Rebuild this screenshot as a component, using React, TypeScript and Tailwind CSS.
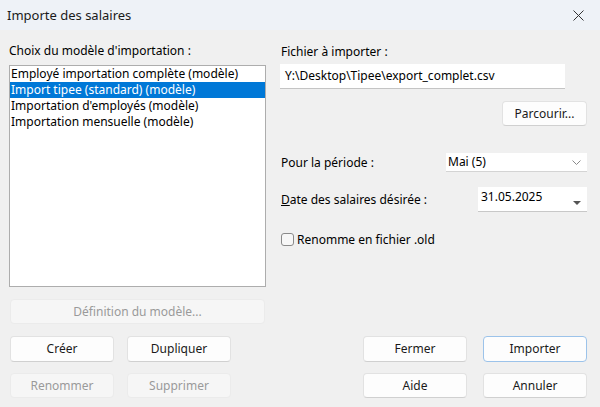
import React from "react";

const font = { fontFamily: '"Noto Sans", "Open Sans", sans-serif' };

function Btn({ children, w, disabled, primary, h = "h-[26px]" }: { children: React.ReactNode; w: string; disabled?: boolean; primary?: boolean; h?: string }) {
  const base = `${w} ${h} flex items-center justify-center rounded-[4px] text-[12px] border`;
  const cls = disabled
    ? `${base} bg-[#f6f6f6] border-[#ebebeb] text-[#9a9a9a]`
    : primary
    ? `${base} bg-[#fdfdfd] border-[#9cc3ea] text-[#1a1a1a]`
    : `${base} bg-[#fdfdfd] border-[#e2e2e2] border-b-[#d0d0d0] text-[#1a1a1a]`;
  return <div className={cls}>{children}</div>;
}

export default function App() {
  const items = [
    "Employé importation complète (modèle)",
    "Import tipee (standard) (modèle)",
    "Importation d'employés (modèle)",
    "Importation mensuelle (modèle)",
  ];
  return (
    <div className="w-[600px] h-[407px] flex flex-col bg-[#f0f0f0] text-black overflow-hidden" style={font}>
      <div className="h-[30px] flex items-center justify-between bg-[#eef2f7] pl-[7px] pr-[16px]">
        <span className="text-[13px] leading-none text-[#1a1a1a]">Importe des salaires</span>
        <svg width="11" height="11" viewBox="0 0 11 11">
          <path d="M0.5 0.5 L10.5 10.5 M10.5 0.5 L0.5 10.5" stroke="#333" strokeWidth="1" />
        </svg>
      </div>
      <div className="flex-1 flex pl-[9px] pb-[9px]">
        {/* left column */}
        <div className="w-[257px] flex flex-col pt-[13px]">
          <div className="text-[12px] leading-[16px]">Choix du modèle d'importation :</div>
          <div className="mt-[6px] h-[222px] bg-white border border-[#adadad]">
            {items.map((t, i) => (
              <div
                key={t}
                className={`h-[16px] leading-[16px] text-[12px] pl-[1px] whitespace-nowrap ${i === 1 ? "bg-[#0078d7] text-white" : "text-black"}`}
              >
                {t}
              </div>
            ))}
          </div>
          <div className="mt-[12px] px-[1px]">
            <Btn w="w-[255px]" h="h-[25px]" disabled>Définition du modèle...</Btn>
          </div>
          <div className="mt-[12px] flex gap-[13px] px-[1px]">
            <Btn w="w-[104px]">Créer</Btn>
            <Btn w="w-[104px]">Dupliquer</Btn>
          </div>
          <div className="mt-[11px] flex gap-[13px] px-[1px]">
            <Btn w="w-[104px]" h="h-[25px]" disabled>Renommer</Btn>
            <Btn w="w-[104px]" h="h-[25px]" disabled>Supprimer</Btn>
          </div>
        </div>
        {/* right column */}
        <div className="ml-[14px] w-[307px] flex flex-col pt-[14px]">
          <div className="text-[12px] leading-[16px] pl-[1px]">Fichier à importer :</div>
          <div className="mt-[4px] w-[285px] h-[25px] bg-white border-b border-[#c4c4c4] flex items-center pl-[5px] text-[12px]">
            Y:\Desktop\Tipee\export_complet.csv
          </div>
          <div className="mt-[12px] self-end">
            <Btn w="w-[85px]" h="h-[25px]">Parcourir...</Btn>
          </div>
          <div className="mt-[27px] flex items-center justify-between h-[19px]">
            <span className="text-[12px] pl-[1px]">Pour la période :</span>
            <div className="w-[141px] h-[19px] bg-white border-b border-[#d4d4d4] flex items-center justify-between pl-[2px] pr-[6px] text-[12px]">
              <span>Mai (5)</span>
              <svg width="9" height="5" viewBox="0 0 9 5">
                <path d="M0.5 0.5 L4.5 4.5 L8.5 0.5" stroke="#8a8a8a" strokeWidth="1" fill="none" />
              </svg>
            </div>
          </div>
          <div className="mt-[15px] flex items-center justify-between h-[25px]">
            <span className="text-[12px] pl-[1px]"><span className="underline">D</span>ate des salaires désirée :</span>
            <div className="w-[109px] h-[25px] bg-white border-b border-[#c8c8c8] flex justify-between pl-[3px] pr-[6px] text-[12px]">
              <span className="leading-[19px]">31.05.2025</span>
              <svg width="8" height="4" viewBox="0 0 8 4" className="mt-[14px]">
                <path d="M0 0 L8 0 L4 4 Z" fill="#555" />
              </svg>
            </div>
          </div>
          <div className="mt-[21px] flex items-center h-[13px] pl-[1px]">
            <div className="w-[13px] h-[13px] rounded-[3px] border border-[#8a8a8a] bg-[#f7f7f7]" />
            <span className="ml-[3px] text-[12px] leading-[16px]">Renomme en fichier .old</span>
          </div>
          <div className="mt-auto flex flex-col gap-[11px] pl-[83px]">
            <div className="flex gap-[16px]">
              <Btn w="w-[104px]">Fermer</Btn>
              <Btn w="w-[104px]" primary>Importer</Btn>
            </div>
            <div className="flex gap-[16px]">
              <Btn w="w-[104px]" h="h-[25px]">Aide</Btn>
              <Btn w="w-[104px]" h="h-[25px]">Annuler</Btn>
            </div>
          </div>
        </div>
      </div>
    </div>
  );
}
